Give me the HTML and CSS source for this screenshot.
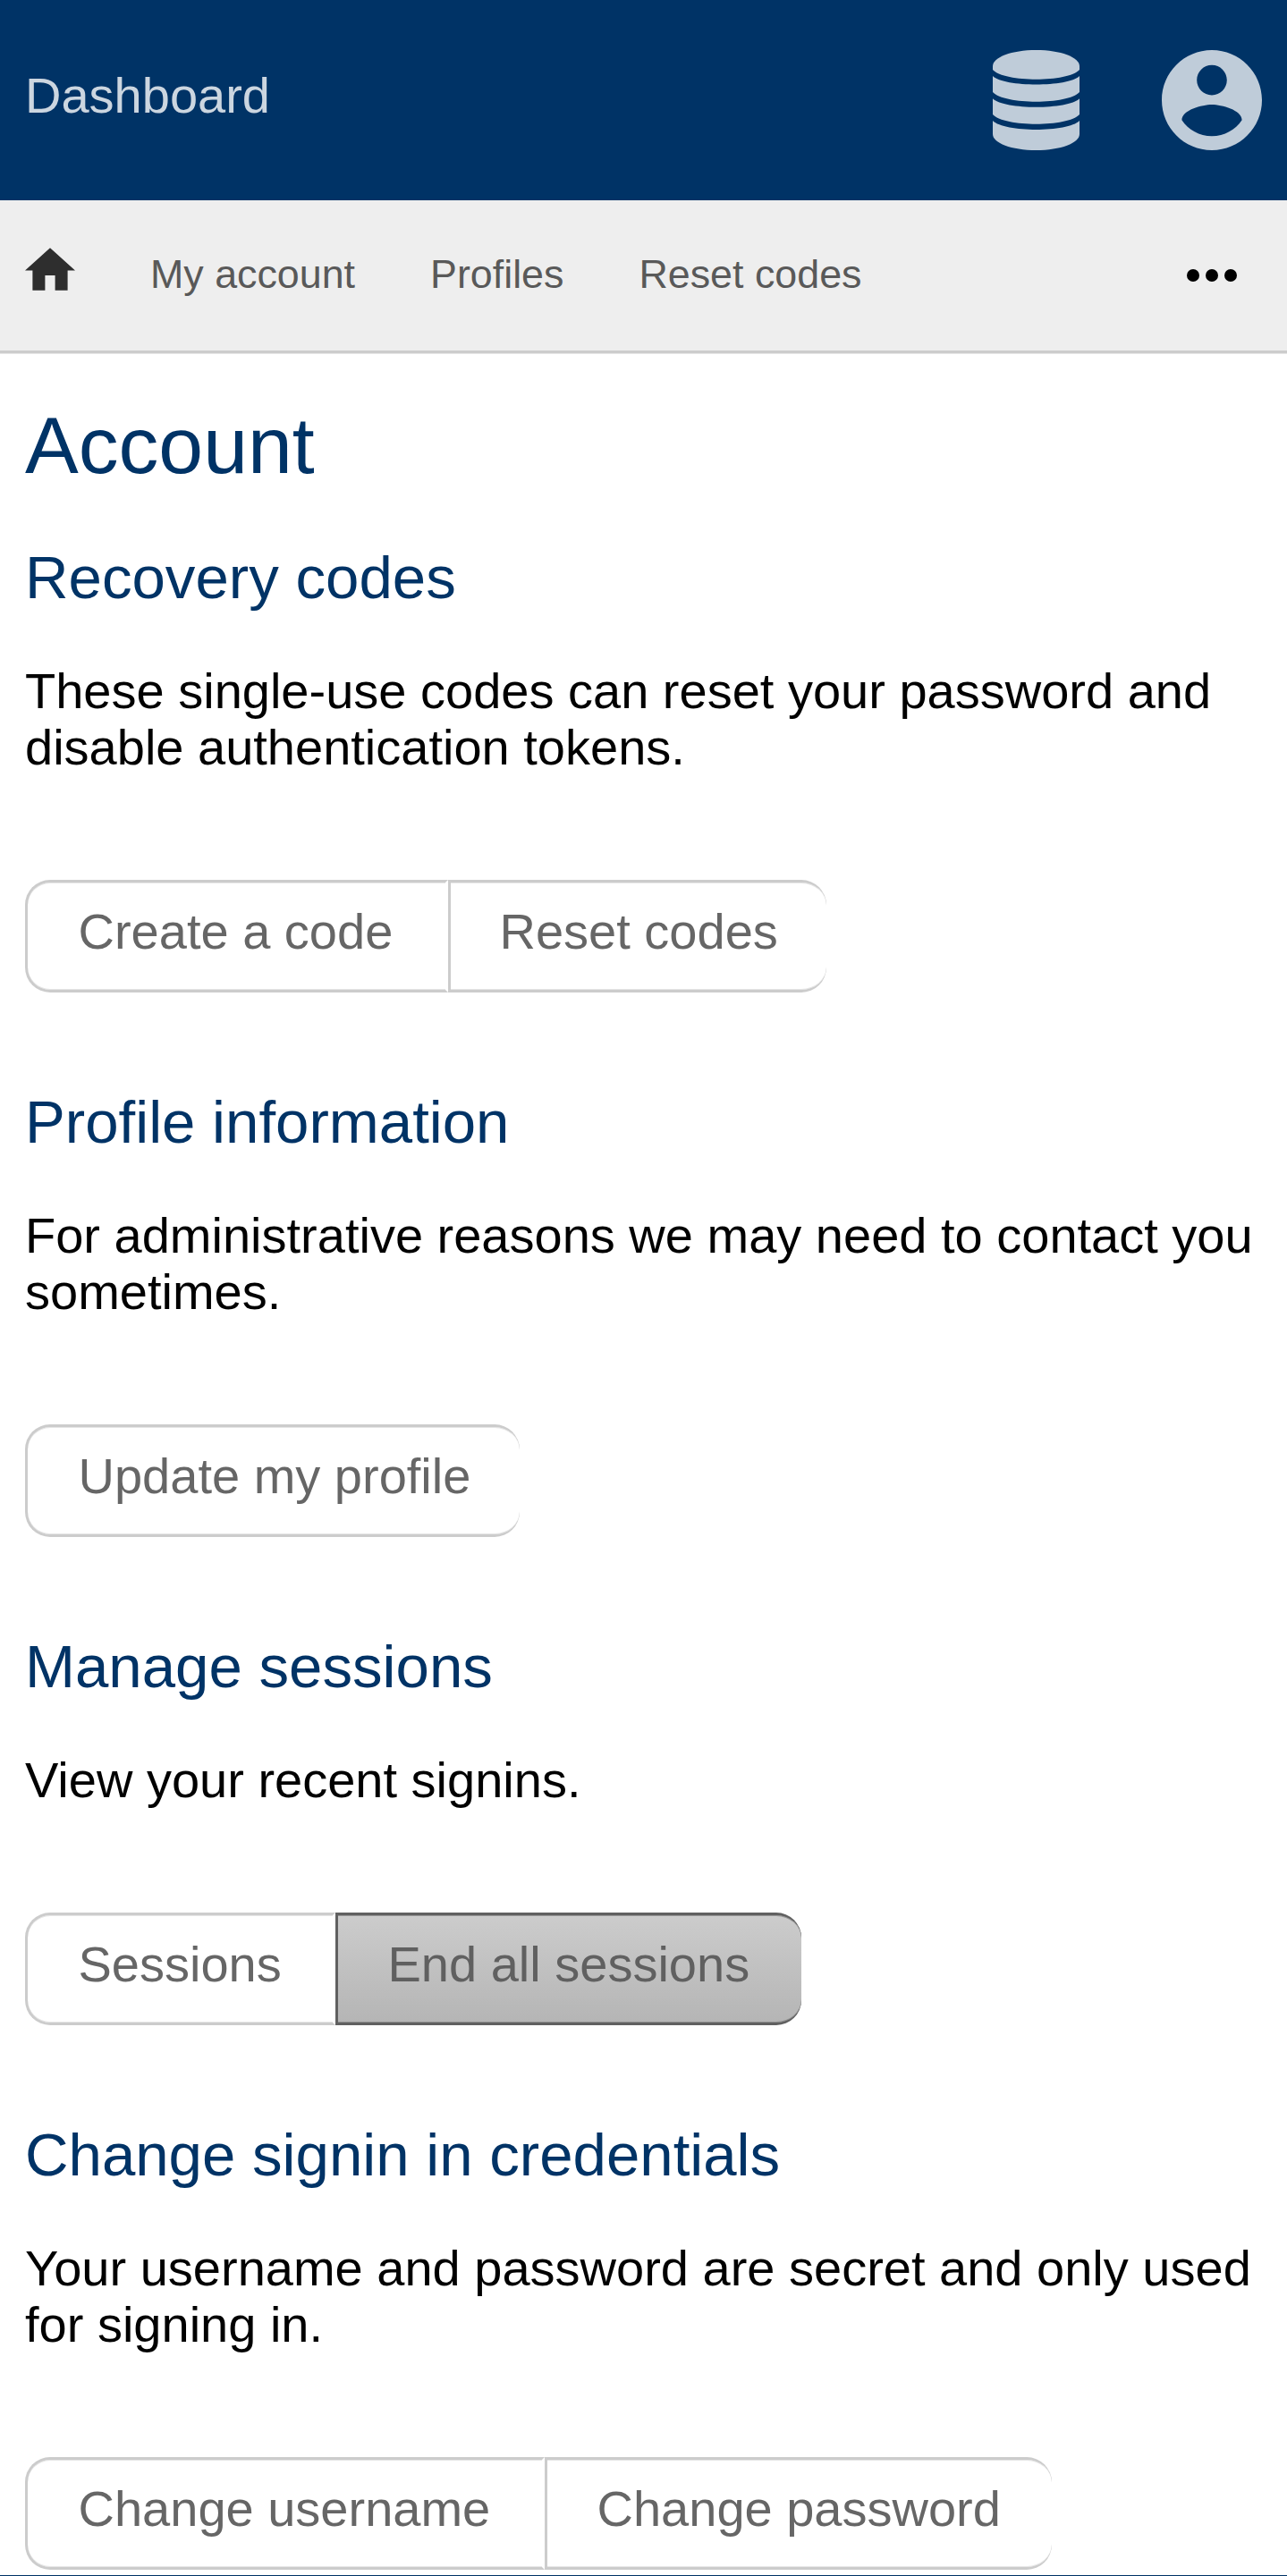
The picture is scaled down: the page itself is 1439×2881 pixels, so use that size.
FILE: index.html
```html
<!DOCTYPE html>
<html lang="en">
<head>
<meta charset="utf-8">
<title>Account</title>
<link rel="stylesheet" href="styles.css">
</head>
<body>
<header class="header">
  <a class="brand">Dashboard</a>
  <div class="header-icons">
    <svg class="db" viewBox="0 0 97 112">
      <path d="M0 18C0 8 21 0 48.500 0S97 8 97 18V22C84 36.300 13 36.300 0 22Z"/>
      <path d="M0 29C13 41.700 84 41.700 97 29V47C84 61.300 13 61.300 0 47Z"/>
      <path d="M0 54.300C13 67 84 67 97 54.300V72C84 86.300 13 86.300 0 72Z"/>
      <path d="M0 79C13 92.300 84 92.300 97 79V94C97 104 76 112 48.500 112S0 104 0 94Z"/>
    </svg>
    <svg class="user" viewBox="2 2 20 20"><path d="M12 2C6.480 2 2 6.480 2 12s4.480 10 10 10 10-4.480 10-10S17.520 2 12 2zm0 3c1.660 0 3 1.340 3 3s-1.340 3-3 3-3-1.340-3-3 1.340-3 3-3zm0 14.200c-2.500 0-4.710-1.280-6-3.220.030-1.990 4-3.080 6-3.080 1.990 0 5.970 1.090 6 3.080-1.290 1.940-3.500 3.220-6 3.220z"/></svg>
  </div>
</header>
<nav class="nav">
  <a class="home"><svg viewBox="2 3 20 17"><path d="M10 20v-6h4v6h5v-8h3L12 3 2 12h3v8z"/></svg></a>
  <a>My account</a>
  <a>Profiles</a>
  <a>Reset codes</a>
  <span class="more"><i></i><i></i><i></i></span>
</nav>
<main>
  <h1>Account</h1>
  <section>
    <h2>Recovery codes</h2>
    <p>These single-use codes can reset your password and disable authentication tokens.</p>
    <div class="buttons"><a class="create">Create a code</a><a class="reset">Reset codes</a></div>
  </section>
  <section>
    <h2>Profile information</h2>
    <p>For administrative reasons we may need to contact you sometimes.</p>
    <div class="buttons"><a class="profile">Update my profile</a></div>
  </section>
  <section>
    <h2>Manage sessions</h2>
    <p>View your recent signins.</p>
    <div class="buttons"><a class="sessions">Sessions</a><a class="danger">End all sessions</a></div>
  </section>
  <section>
    <h2>Change signin in credentials</h2>
    <p>Your username and password are secret and only used for signing in.</p>
    <div class="buttons"><a class="username">Change username</a><a class="password">Change password</a></div>
  </section>
</main>
<footer class="footer"></footer>
</body>
</html>
```
FILE: styles.css
```css
* { box-sizing: border-box; }
body { margin: 0; font: 56px/63px "Liberation Sans", Arial, sans-serif; color: #000; background: #fff; height: 2881px; overflow: hidden; }
.header { height: 224px; background: #036; display: flex; justify-content: space-between; padding: 56px 28px; color: #ccd6e0; }
.brand { line-height: 102px; }
.header-icons { display: flex; gap: 92px; }
.header-icons svg { height: 112px; fill: #bfccd9; }
.db { width: 97px; }
.user { width: 112px; }
.nav { height: 171px; background: #eee; border-bottom: 3px solid #ccc; box-shadow: 0 1px #e6e6e6; display: flex; align-items: center; gap: 84px; padding: 0 56px 0 28px; font-size: 44.8px; color: #595959; }
.nav a { margin-top: -3px; }
.nav .home { display: flex; margin-top: -14px; }
.home svg { width: 56px; height: 48px; fill: #2e2e2e; }
.more { display: flex; gap: 6.5px; margin-left: auto; }
.more i { width: 14.3px; height: 14.3px; border-radius: 50%; background: #000; }
main { padding: 54px 28px 0; }
h1 { margin: 0 0 61px; font-size: 89.6px; line-height: 98px; font-weight: 400; color: #036; }
h2 { margin: 0; font-size: 67.2px; line-height: 76px; font-weight: 400; color: #036; }
section { margin-bottom: 107px; }
section:last-child { margin-bottom: 6px; }
p { margin: 57px 0 117px; }
.buttons { display: flex; height: 126px; }
.buttons a { border: 3px solid #ccc; border-right: 0; padding: 23px 0 0 54.5px; color: #666; white-space: nowrap; box-shadow: inset 0 1px #e6e6e6, inset 0 -1px #e6e6e6; }
.buttons a:first-child { border-radius: 28px 0 0 28px; border-right: 3px solid transparent; padding-left: 56.5px; }
.buttons a:last-child { border-radius: 0 28px 28px 0; }
.buttons a:only-child { border-radius: 28px; border-right: 0; }
.buttons .create { width: 473px; }
.buttons .reset { width: 423px; }
.buttons .profile { width: 553px; }
.buttons .sessions { width: 347px; }
.buttons .danger { width: 521px; padding-left: 55.5px; border-color: #606060; color: #606060; background: linear-gradient(#ccc, #b5b5b5); box-shadow: inset 0 1px #969696, inset 0 -1px #8f8f8f; }
.buttons .username { width: 581px; }
.buttons .password { width: 567px; padding-left: 55.5px; }
.footer { height: 56px; background: #036; }
```
